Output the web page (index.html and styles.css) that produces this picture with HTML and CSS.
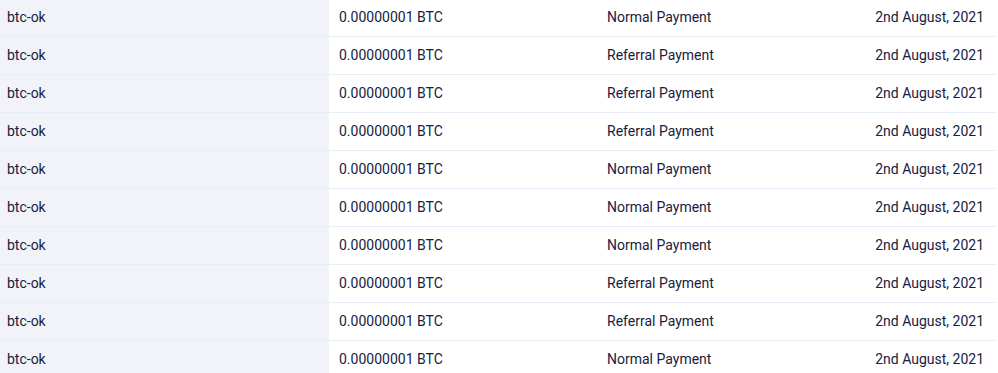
FILE: index.html
```html
<!DOCTYPE html>
<html lang="en">
<head>
<meta charset="utf-8">
<title>Payments</title>
<link rel="stylesheet" href="styles.css">
</head>
<body>
<table class="payments">
  <tbody>
    <tr><td class="user">btc-ok</td><td class="amount">0.00000001 BTC</td><td class="type">Normal Payment</td><td class="date">2nd August, 2021</td></tr>
    <tr><td class="user">btc-ok</td><td class="amount">0.00000001 BTC</td><td class="type">Referral Payment</td><td class="date">2nd August, 2021</td></tr>
    <tr><td class="user">btc-ok</td><td class="amount">0.00000001 BTC</td><td class="type">Referral Payment</td><td class="date">2nd August, 2021</td></tr>
    <tr><td class="user">btc-ok</td><td class="amount">0.00000001 BTC</td><td class="type">Referral Payment</td><td class="date">2nd August, 2021</td></tr>
    <tr><td class="user">btc-ok</td><td class="amount">0.00000001 BTC</td><td class="type">Normal Payment</td><td class="date">2nd August, 2021</td></tr>
    <tr><td class="user">btc-ok</td><td class="amount">0.00000001 BTC</td><td class="type">Normal Payment</td><td class="date">2nd August, 2021</td></tr>
    <tr><td class="user">btc-ok</td><td class="amount">0.00000001 BTC</td><td class="type">Normal Payment</td><td class="date">2nd August, 2021</td></tr>
    <tr><td class="user">btc-ok</td><td class="amount">0.00000001 BTC</td><td class="type">Referral Payment</td><td class="date">2nd August, 2021</td></tr>
    <tr><td class="user">btc-ok</td><td class="amount">0.00000001 BTC</td><td class="type">Referral Payment</td><td class="date">2nd August, 2021</td></tr>
    <tr><td class="user">btc-ok</td><td class="amount">0.00000001 BTC</td><td class="type">Normal Payment</td><td class="date">2nd August, 2021</td></tr>
  </tbody>
</table>
</body>
</html>
```
FILE: styles.css
```css
html, body {
  margin: 0;
  padding: 0;
  background: #ffffff;
}
body {
  font-family: Roboto, "Liberation Sans", Arial, sans-serif;
  font-size: 14px;
  color: #1a2040;
  overflow: hidden;
}
.payments {
  width: 996px;
  border-collapse: collapse;
  table-layout: fixed;
  margin-top: -2px;
}
.payments td {
  height: 38px;
  padding: 0;
  border-bottom: 1px solid #e8eef9;
  vertical-align: middle;
  white-space: nowrap;
  box-sizing: border-box;
  line-height: 16px;
}
.payments .user {
  width: 329px;
  padding-left: 7px;
  background: #f1f3f8;
}
.payments .amount {
  width: 268px;
  padding-left: 10px;
}
.payments .type {
  width: 200px;
  padding-left: 10px;
}
.payments .date {
  text-align: right;
  padding-right: 12px;
}
```
